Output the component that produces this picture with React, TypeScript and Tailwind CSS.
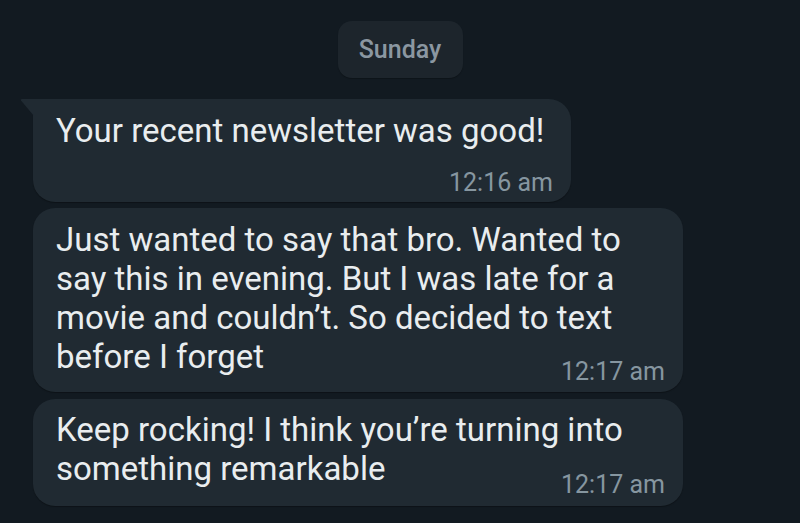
import React from "react";

function Time({ t, extra }: { t: string; extra?: string }) {
  return (
    <span
      className={`shrink-0 text-[25px] leading-[30px] text-[#8696a0] whitespace-nowrap ${extra ?? ""}`}
    >
      {t}
    </span>
  );
}

export default function App() {
  return (
    <div
      className="w-[800px] h-[523px] overflow-hidden bg-[#121a21] flex flex-col"
      style={{ fontFamily: "Roboto, 'Noto Sans', sans-serif" }}
    >
      <div className="flex justify-center pt-[21px]">
        <div className="w-[125px] h-[57px] rounded-[14px] bg-[#1d252c] flex items-center justify-center text-[25px] font-medium text-[#8b97a1] shadow-[0_1px_1px_rgba(0,0,0,0.25)]">
          Sunday
        </div>
      </div>

      <div className="flex flex-col gap-[6px] pl-[33px] mt-[21px]">
        {/* Bubble 1 */}
        <div className="relative w-[538px] rounded-[22px] rounded-tl-none bg-[#202a32] pl-[23px] pr-[18px] pt-[12px] pb-[4px] flex flex-col shadow-[0_1px_1px_rgba(0,0,0,0.3)]">
          <svg
            className="absolute left-[-13px] top-0"
            width="14"
            height="18"
            viewBox="0 0 14 18"
          >
            <path d="M14 0 L2 0 Q0 0 1 1.5 L14 17 Z" fill="#202a32" />
          </svg>
          <div className="text-[33px] leading-[39px] text-[#e9edef] whitespace-nowrap">
            Your recent newsletter was good!
          </div>
          <Time t="12:16 am" extra="self-end mt-[18px]" />
        </div>

        {/* Bubble 2 */}
        <div className="w-[650px] rounded-[22px] bg-[#202a32] pl-[23px] pr-[18px] pt-[12px] pb-[5px] flex flex-col text-[33px] leading-[39px] text-[#e9edef] shadow-[0_1px_1px_rgba(0,0,0,0.3)]">
          <div className="whitespace-nowrap">Just wanted to say that bro. Wanted to</div>
          <div className="whitespace-nowrap">say this in evening. But I was late for a</div>
          <div className="whitespace-nowrap">movie and couldn’t. So decided to text</div>
          <div className="flex items-start justify-between">
            <span className="whitespace-nowrap">before I forget</span>
            <Time t="12:17 am" extra="mt-[20px]" />
          </div>
        </div>

        {/* Bubble 3 */}
        <div className="w-[650px] mt-[1px] rounded-[22px] bg-[#202a32] pl-[23px] pr-[18px] pt-[11px] pb-[6px] flex flex-col text-[33px] leading-[39px] text-[#e9edef] shadow-[0_1px_1px_rgba(0,0,0,0.3)]">
          <div className="whitespace-nowrap">Keep rocking! I think you’re turning into</div>
          <div className="flex items-start justify-between">
            <span className="whitespace-nowrap">something remarkable</span>
            <Time t="12:17 am" extra="mt-[21px]" />
          </div>
        </div>
      </div>
    </div>
  );
}
